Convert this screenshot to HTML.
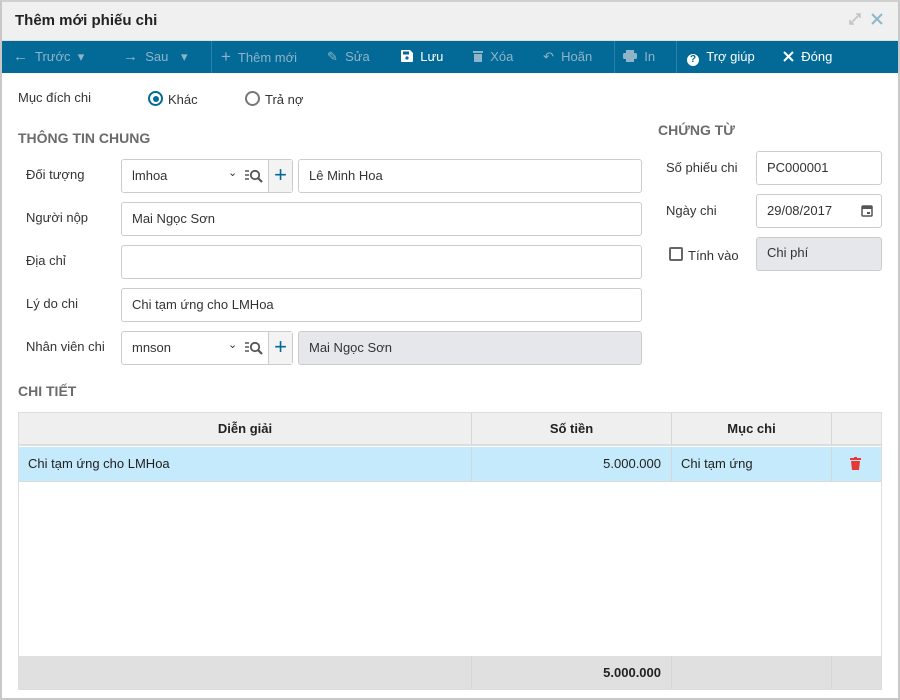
<!DOCTYPE html>
<html><head><meta charset="utf-8"><style>
*{box-sizing:border-box;margin:0;padding:0}
body{width:900px;height:700px;background:#fff;font-family:"Liberation Sans",Arial,sans-serif;font-size:13px;color:#333;position:relative;overflow:hidden}
.a{position:absolute}
.win{left:0;top:0;width:900px;height:700px;border:2px solid #c8c8c8;border-top:2px solid #d0d0d0}
.title{left:2px;top:2px;width:896px;height:39px;background:#f0f0f0;border-bottom:1px solid #ddd}
.tb{left:2px;top:41px;width:896px;height:32px;background:#036a97}
.ti{top:41px;height:32px;line-height:32px;color:#8db4c9;font-size:13px;white-space:nowrap}
.ti.w{color:#fff}
.sep{top:41px;width:1px;height:32px;background:#2b82a8}
.lbl{font-size:13px;color:#333}
.in{border:1px solid #ccc;border-radius:3px;height:34px;line-height:32px;padding-left:10px;background:#fff;font-size:13px}
.dis{background:#e6e7eb}
.h{font-weight:bold;font-size:14px;color:#6b6b6b}
.cell{border-right:1px solid #d6d6d6;height:100%}
</style></head><body>
<div class="a win"></div>
<div class="a title"></div>
<div class="a" style="left:15px;top:12px;font-size:15px;font-weight:bold;color:#222">Thêm mới phiếu chi</div>
<svg class="a" style="left:848px;top:12px" width="14" height="14" viewBox="0 0 14 14"><path d="M2 12L12 2M8 2h4v4M2 8v4h4" stroke="#c4c4c4" stroke-width="1.6" fill="none"/></svg>
<svg class="a" style="left:871px;top:13px" width="12" height="12" viewBox="0 0 12 12"><path d="M1 1L11 11M11 1L1 11" stroke="#8fb6c9" stroke-width="2"/></svg>
<div class="a tb"></div>
<div class="a ti" style="left:13px"><span style="font-size:15px">←</span>&nbsp; Trước &nbsp;▾</div>
<div class="a ti" style="left:123px"><span style="font-size:15px">→</span>&nbsp; Sau</div>
<div class="a ti" style="left:181px">▾</div>
<div class="a sep" style="left:211px"></div>
<div class="a ti" style="left:221px"><span style="font-size:17px">+</span>&nbsp; Thêm mới</div>
<div class="a ti" style="left:327px">✎&nbsp; Sửa</div>
<div class="a ti w" style="left:401px"><svg width="12" height="12" viewBox="0 0 12 12" style="vertical-align:-1px"><path d="M0 1a1 1 0 011-1h8l3 3v8a1 1 0 01-1 1H1a1 1 0 01-1-1z" fill="#fff"/><rect x="2" y="1.5" width="6" height="3" fill="#036a97"/><circle cx="6" cy="8" r="1.6" fill="#036a97"/></svg>&nbsp;&nbsp;Lưu</div>
<div class="a ti" style="left:473px"><svg width="10" height="12" viewBox="0 0 10 12" style="vertical-align:-1px"><rect x="0" y="1" width="10" height="2" fill="#8db4c9"/><rect x="1" y="4" width="8" height="8" fill="#8db4c9"/></svg>&nbsp;&nbsp;Xóa</div>
<div class="a ti" style="left:543px">↶&nbsp; Hoãn</div>
<div class="a sep" style="left:614px"></div>
<div class="a ti" style="left:623px"><svg width="14" height="12" viewBox="0 0 14 12" style="vertical-align:-1px"><rect x="3" y="0" width="8" height="3" fill="#8db4c9"/><rect x="0" y="3" width="14" height="6" rx="1.5" fill="#8db4c9"/><rect x="3" y="7" width="8" height="5" fill="#8db4c9"/></svg>&nbsp; In</div>
<div class="a sep" style="left:676px"></div>
<div class="a ti w" style="left:687px"><span style="display:inline-block;width:12px;height:12px;border-radius:6px;background:#fff;color:#036a97;font-size:10px;line-height:12px;text-align:center;font-weight:bold;vertical-align:-1px">?</span>&nbsp;&nbsp;Trợ giúp</div>
<div class="a ti w" style="left:783px"><svg width="11" height="11" viewBox="0 0 11 11" style="vertical-align:-1px"><path d="M1 1L10 10M10 1L1 10" stroke="#fff" stroke-width="2"/></svg>&nbsp;&nbsp;Đóng</div>

<div class="a lbl" style="left:18px;top:90px">Mục đích chi</div>
<div class="a" style="left:148px;top:91px;width:15px;height:15px;border:2px solid #036a97;border-radius:50%"><div style="margin:2.5px;width:6px;height:6px;border-radius:50%;background:#036a97"></div></div>
<div class="a lbl" style="left:168px;top:92px">Khác</div>
<div class="a" style="left:245px;top:91px;width:15px;height:15px;border:2px solid #777;border-radius:50%"></div>
<div class="a lbl" style="left:265px;top:92px">Trả nợ</div>

<div class="a h" style="left:18px;top:130px">THÔNG TIN CHUNG</div>
<div class="a h" style="left:658px;top:122px">CHỨNG TỪ</div>

<div class="a lbl" style="left:26px;top:167px">Đối tượng</div>
<div class="a in" style="left:121px;top:159px;width:172px">lmhoa</div>
<div class="a" style="left:268px;top:160px;width:24px;height:32px;background:#f3f3f3;border-left:1px solid #ccc;color:#036a97;font-size:22px;line-height:30px;text-align:center">+</div>
<div class="a" style="left:228px;top:166px;font-size:11px;color:#333">⌄</div>
<svg class="a" style="left:245px;top:169px" width="19" height="14" viewBox="0 0 19 14"><path d="M0 2h4M0 6h4M0 10h4" stroke="#555" stroke-width="1.6"/><circle cx="10" cy="6" r="4.2" stroke="#555" stroke-width="1.8" fill="none"/><path d="M13 9l4 4" stroke="#555" stroke-width="2.2"/></svg>
<div class="a in" style="left:298px;top:159px;width:344px">Lê Minh Hoa</div>

<div class="a lbl" style="left:26px;top:210px">Người nộp</div>
<div class="a in" style="left:121px;top:202px;width:521px">Mai Ngọc Sơn</div>
<div class="a lbl" style="left:26px;top:253px">Địa chỉ</div>
<div class="a in" style="left:121px;top:245px;width:521px"></div>
<div class="a lbl" style="left:26px;top:296px">Lý do chi</div>
<div class="a in" style="left:121px;top:288px;width:521px">Chi tạm ứng cho LMHoa</div>

<div class="a lbl" style="left:26px;top:339px">Nhân viên chi</div>
<div class="a in" style="left:121px;top:331px;width:172px">mnson</div>
<div class="a" style="left:268px;top:332px;width:24px;height:32px;background:#f3f3f3;border-left:1px solid #ccc;color:#036a97;font-size:22px;line-height:30px;text-align:center">+</div>
<div class="a" style="left:228px;top:338px;font-size:11px;color:#333">⌄</div>
<svg class="a" style="left:245px;top:341px" width="19" height="14" viewBox="0 0 19 14"><path d="M0 2h4M0 6h4M0 10h4" stroke="#555" stroke-width="1.6"/><circle cx="10" cy="6" r="4.2" stroke="#555" stroke-width="1.8" fill="none"/><path d="M13 9l4 4" stroke="#555" stroke-width="2.2"/></svg>
<div class="a in dis" style="left:298px;top:331px;width:344px">Mai Ngọc Sơn</div>

<div class="a lbl" style="left:666px;top:160px">Số phiếu chi</div>
<div class="a in" style="left:756px;top:151px;width:126px">PC000001</div>
<div class="a lbl" style="left:666px;top:203px">Ngày chi</div>
<div class="a in" style="left:756px;top:194px;width:126px">29/08/2017</div>
<svg class="a" style="left:861px;top:204px" width="12" height="13" viewBox="0 0 12 13"><rect x="1" y="2" width="10" height="10" rx="1" stroke="#555" stroke-width="1.5" fill="none"/><rect x="1" y="2" width="10" height="3" fill="#555"/><rect x="6" y="8" width="3" height="2" fill="#555"/></svg>
<div class="a" style="left:669px;top:247px;width:14px;height:14px;border:2px solid #666;border-radius:2px"></div>
<div class="a lbl" style="left:688px;top:248px">Tính vào</div>
<div class="a in dis" style="left:756px;top:237px;width:126px;line-height:30px">Chi phí</div>

<div class="a h" style="left:18px;top:383px">CHI TIẾT</div>
<div class="a" style="left:18px;top:412px;width:864px;height:278px;border:1px solid #ddd"></div>
<div class="a" style="left:19px;top:413px;width:862px;height:33px;background:#efefef;border-bottom:2px solid #ddd;display:flex;font-weight:bold;text-align:center;line-height:32px;color:#222">
<div class="cell" style="width:453px">Diễn giải</div><div class="cell" style="width:200px">Số tiền</div><div class="cell" style="width:160px">Mục chi</div><div style="width:49px"></div></div>
<div class="a" style="left:19px;top:447px;width:862px;height:35px;background:#c4eafb;display:flex;line-height:34px;color:#222;border-bottom:1px solid #ddd">
<div class="cell" style="width:453px;padding-left:9px">Chi tạm ứng cho LMHoa</div><div class="cell" style="width:200px;text-align:right;padding-right:10px">5.000.000</div><div class="cell" style="width:160px;padding-left:9px">Chi tạm ứng</div><div style="width:49px;position:relative"><svg style="position:absolute;left:18px;top:10px" width="11" height="13" viewBox="0 0 11 13"><rect x="0" y="1" width="11" height="2" fill="#e53935"/><rect x="4" y="0" width="3" height="1.5" fill="#e53935"/><path d="M1 4h9l-1 9H2z" fill="#e53935"/></svg></div></div>
<div class="a" style="left:19px;top:656px;width:862px;height:33px;background:#e0e0e0;display:flex;line-height:34px;font-weight:bold;color:#222">
<div class="cell" style="width:453px"></div><div class="cell" style="width:200px;text-align:right;padding-right:10px">5.000.000</div><div class="cell" style="width:160px"></div><div style="width:49px"></div></div>
</body></html>
